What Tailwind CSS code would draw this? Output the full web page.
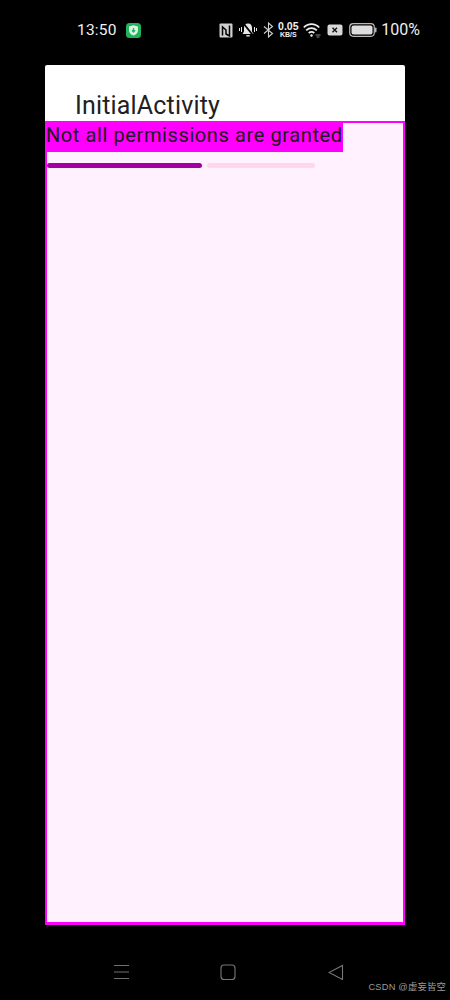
<!DOCTYPE html>
<html lang="en">
<head>
    <meta charset="UTF-8">
    <meta name="viewport" content="width=device-width, initial-scale=1.0">
    <title>InitialActivity</title>
    <script src="https://cdn.jsdelivr.net/npm/@tailwindcss/browser@4"></script>
</head>
<body class="bg-black w-[450px] h-[1000px] overflow-hidden relative font-['Roboto',sans-serif]">

    <!-- status bar -->
    <div class="h-[65px] flex items-start pt-[20px] pl-[77px] pr-[30px] text-white">
        <span class="text-[15.5px] leading-[20px] tracking-[0.2px] text-[#f2f2f2]">13:50</span>
        <svg class="ml-[9px] mt-[3px]" width="15" height="15" viewBox="0 0 15 15">
            <rect width="15" height="15" rx="3.5" fill="#22b45a"/>
            <path d="M7.500 2.300 12 3.500v4c0 2.500-2 4.100-4.500 5.100C5 11.600 3 10 3 7.500v-4z" fill="#d9f5e2"/>
            <path d="M7.500 5v3.400M6 7.300 7.500 9 9 7.300" fill="none" stroke="#22b45a" stroke-width="1.300"/>
        </svg>
        <div class="ml-auto flex items-center h-[20px] text-[#e6e6e6]">
            <svg width="14" height="15" viewBox="0 0 14 15" fill="none">
                <rect x="0.500" y="0.500" width="13" height="14" rx="1" fill="#cfcfcf"/>
                <path d="M3.500 12.500V4l3.500 3v4l3.500 2V2.500" stroke="#000" stroke-width="1.500" fill="none"/>
            </svg>
            <svg class="ml-[6px]" width="18" height="16" viewBox="0 0 18 16" fill="none" stroke="#e6e6e6">
                <path d="M9 1.500C6.200 1.500 5 3.600 5 6v3.500l-1.500 2.500h11L13 9.500V6c0-2.400-1.200-4.500-4-4.500z" fill="#e6e6e6" stroke="none"/>
                <path d="M7.300 13.800h3.400" stroke-width="1.400"/>
                <path d="M4.500 1.500 15 14.500" stroke="#000" stroke-width="1.800"/>
                <path d="M0.500 6v3M2.500 5v5M15.500 5v5M17.500 6v3" stroke-width="1"/>
            </svg>
            <svg class="ml-[6px]" width="11" height="16" viewBox="0 0 11 16" fill="none" stroke="#d0d0d0" stroke-width="1.100">
                <path d="M1 4.500 9.500 11.500 5.500 15V1l4 3.500L1 11.500"/>
            </svg>
            <div class="ml-[3px] w-[22px] flex flex-col items-center text-[#f0f0f0] font-['Liberation_Sans',sans-serif] font-bold">
                <span class="text-[10.500px] leading-[10px]">0.05</span>
                <span class="text-[7px] leading-[8px]">KB/S</span>
            </div>
            <svg class="ml-[4px]" width="18" height="16" viewBox="0 0 18 16" fill="none" stroke="#eeeeee" stroke-width="1.700">
                <path d="M0.800 5.500C5 1 12 1 16.200 5.500"/>
                <path d="M3.200 8.300C6.300 5.300 10.700 5.300 13.800 8.300"/>
                <path d="M5.700 11C7.300 9.600 9.700 9.600 11.300 11"/>
                <circle cx="8.500" cy="13.500" r="1.200" fill="#eeeeee" stroke="none"/>
                <path d="M12.500 13h5M13.500 15h3" stroke="#8a8a8a" stroke-width="1"/>
            </svg>
            <svg class="ml-[6px]" width="16" height="12" viewBox="0 0 16 12">
                <rect x="0.500" y="0.500" width="15" height="11" rx="2" fill="#d8d8d8"/>
                <path d="M5.500 3.800 10 8.200M10 3.800 5.500 8.200" stroke="#111" stroke-width="1.400"/>
            </svg>
            <svg class="ml-[6px]" width="28" height="14" viewBox="0 0 28 14" fill="none">
                <rect x="0.700" y="0.700" width="24.600" height="12.600" rx="3.500" stroke="#b8b8b8" stroke-width="1.200"/>
                <rect x="2.500" y="2.500" width="21" height="9" rx="2" fill="#dddddd"/>
                <rect x="26" y="4.500" width="1.500" height="5" rx="0.700" fill="#b8b8b8"/>
            </svg>
            <span class="ml-[4px] text-[16px] leading-[20px] text-[#eeeeee]">100%</span>
        </div>
    </div>

    <!-- app window -->
    <div class="ml-[45px] w-[360px] h-[860px] flex flex-col rounded-t-[2px] bg-white overflow-hidden">
        <div class="h-[56px] shrink-0 pl-[30px] pt-[26px] text-[25px] leading-[30px] tracking-[0.17px] text-[#212121]">InitialActivity</div>
        <div class="flex-1 bg-[#fff2fe] border-2 border-b-[3px] border-[#ff00ff]">
            <div class="-mt-[1px] -ml-[1px] w-[297px] h-[30px] bg-[#ff00ff] text-[20px] leading-[27px] tracking-[0.6px] text-[#1c1c1c] whitespace-nowrap">Not all permissions are granted</div>
            <div class="mt-[11px] flex gap-[5px]">
                <div class="w-[155px] h-[5px] rounded-full bg-[#a300a3]"></div>
                <div class="w-[108px] h-[5px] rounded-full bg-[#ffd6ec]"></div>
            </div>
        </div>
    </div>

    <!-- nav bar -->
    <div class="h-[76px] flex items-start pt-[39px] pl-[114px] text-[#777777]">
        <svg width="16" height="16" viewBox="0 0 16 16" stroke="#6e6e6e" stroke-width="1"><path d="M0 1.500H15M0 8H15M0 14.500H15"/></svg>
        <svg class="ml-[90px]" width="16" height="16" viewBox="0 0 16 16" fill="none" stroke="#777777" stroke-width="1.100"><rect x="1" y="1" width="14" height="14.500" rx="3"/></svg>
        <svg class="ml-[92px]" width="16" height="16" viewBox="0 0 16 16" fill="none" stroke="#777777" stroke-width="1.100"><path d="M14.500 1.500V15.500L1 8.500z"/></svg>
    </div>

    <!-- watermark -->
    <div class="absolute right-[4px] top-[981px] text-[9.300px] leading-[13px] text-[#9a9a9a] font-['Liberation_Sans','Noto_Sans_CJK_SC',sans-serif] tracking-[0.2px]">CSDN @虚妄皆空</div>
</body>
</html>
